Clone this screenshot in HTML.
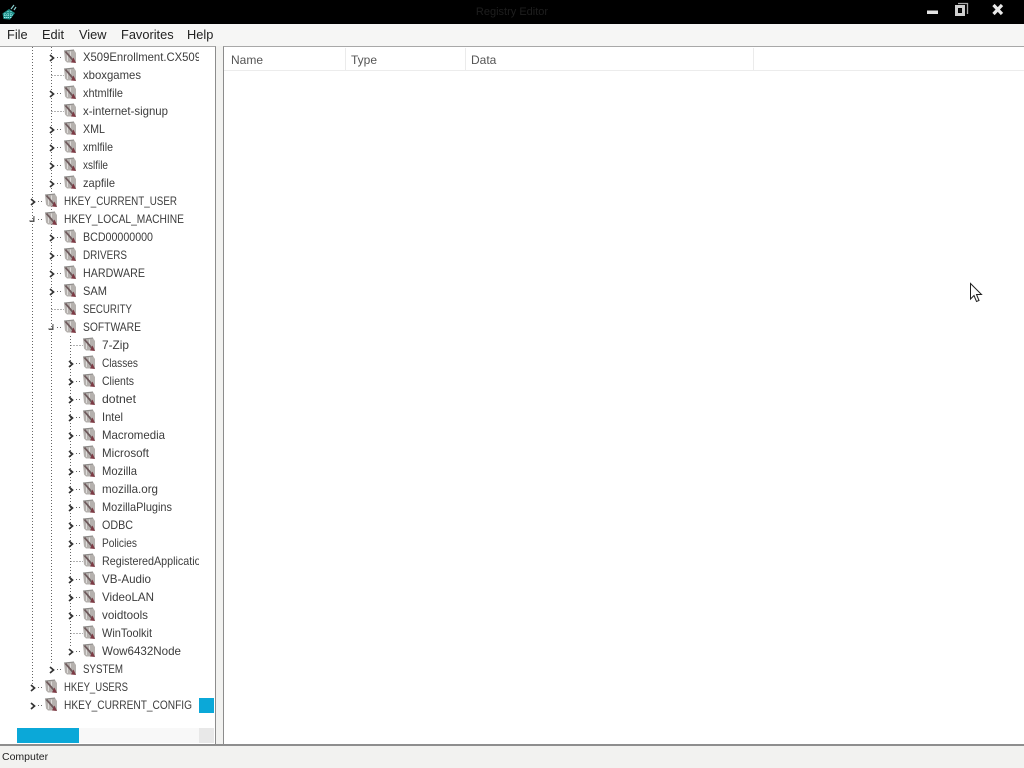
<!DOCTYPE html>
<html><head><meta charset="utf-8"><title>Registry Editor</title>
<style>
html,body{margin:0;padding:0;width:1024px;height:768px;overflow:hidden;background:#f2f2f0;font-family:"Liberation Sans",sans-serif}
.a{position:absolute}
#title{left:0;top:0;width:1024px;height:24px;background:#000}
#ttext{left:0;width:1024px;top:6px;text-align:center;font-size:11px;color:#1e1e1e}
#menu{left:0;top:24px;width:1024px;height:22px;background:#f6f6f5}
#menu span{position:absolute;top:3px;font-size:12.8px;color:#222}
#tree{left:0;top:46px;width:215px;height:699px;background:#fff;border-top:1px solid #a8a8a8;border-right:1px solid #8c8c8c;box-sizing:content-box}
#list{left:223px;top:46px;width:801px;height:698px;background:#fff;border-top:1px solid #a8a8a8;border-left:1px solid #8c8c8c}
#hdr{left:224px;top:70px;width:800px;height:1px;background:#ececec}
.hs{top:48px;width:1px;height:22px;background:#ebebeb}
.ht{top:53px;font-size:12px;color:#555}
#line{left:0;top:744px;width:1024px;height:2px;background:#8e8e8e}
#status{left:2px;top:751px;font-size:10.5px;color:#222}
</style></head><body>
<div class="a" id="title"></div>
<svg class="a" style="left:2px;top:4px" width="16" height="16" viewBox="0 0 16 16"><path d="M0.500 9.500L7 5L13 9L8 15.500L1.500 15Z" fill="#1f8f88"/><path d="M3 9v6M6 7v8M9 7v8M2 11h10M2 13.500h8" stroke="#bff" stroke-width=".8" stroke-dasharray="1 1"/><path d="M9 5l3-4M12 6l2-3" stroke="#8cc" stroke-width="1.200"/></svg>
<div class="a" id="ttext">Registry Editor</div>
<svg class="a" style="left:920px;top:0" width="100" height="24" viewBox="0 0 100 24">
<rect x="7" y="10.500" width="11" height="3.500" fill="#e4e4e4"/>
<rect x="36.500" y="6.500" width="7" height="8" fill="none" stroke="#d0d0d0" stroke-width="3"/>
<path d="M38 3.500h9.500v10.500" fill="none" stroke="#aaa" stroke-width="1.300"/>
<rect x="39" y="9" width="2.500" height="3" fill="#111"/>
<path d="M73.500 5L82 14M82 5L73.500 14" stroke="#e8e8e8" stroke-width="3.200"/>
</svg>
<div class="a" id="menu">
<span style="left:7px">File</span><span style="left:42px">Edit</span><span style="left:79px">View</span><span style="left:121px">Favorites</span><span style="left:187px">Help</span>
</div>
<div class="a" id="tree"></div>
<svg class="a" style="left:0;top:47px" width="215" height="697" viewBox="0 47 215 697">
<defs>
<clipPath id="c"><rect x="0" y="47" width="199" height="697"/></clipPath>
<g id="i">
<path d="M0 1L10 0L12 3L12 12.500L3 12.500L1 10.500Z" fill="#b5b1ae"/>
<path d="M3.500 2L3.500 11M6.500 1.500L6.500 6" stroke="#dedcda" stroke-width="1"/>
<path d="M1.500 1.500L10 11.500" stroke="#6e5a5c" stroke-width="1.800"/>
<path d="M9.500 7.500L12 13L7 12.500Z" fill="#7d3a44"/>
<path d="M0 1L10 0" stroke="#8a8886" stroke-width="1"/>
</g>
<path id="o" d="M-2.500 -3L1 0L-2.500 3" fill="none" stroke="#333" stroke-width="1.700"/>
<path id="d" d="M-3 1.500L1 1.500L1.500 -3L2.500 -3L2.500 3L-2 3Z" fill="#555"/>
</defs>
<g fill="none" stroke="#666" stroke-dasharray="1 2">
<path d="M32.500 47V692"/><path d="M51.500 47V664"/><path d="M70.500 336V646"/>
<path d="M51.500 75.500H64M51.500 111.500H64M51.500 309.500H64M70.500 345.500H83M70.500 561.500H83M70.500 633.500H83"/>
<path d="M57 57.500H63M57 93.500H63M57 129.500H63M57 147.500H63M57 165.500H63M57 183.500H63M57 237.500H63M57 255.500H63M57 273.500H63M57 291.500H63M57 327.500H63M57 669.500H63"/>
<path d="M38 201.500H44M38 219.500H44M38 687.500H44M38 705.500H44"/>
<path d="M76 363.500H82M76 381.500H82M76 399.500H82M76 417.500H82M76 435.500H82M76 453.500H82M76 471.500H82M76 489.500H82M76 507.500H82M76 525.500H82M76 543.500H82M76 579.500H82M76 597.500H82M76 615.500H82M76 651.500H82"/>
</g>
<g>
<use href="#o" x="52.500" y="58"/><use href="#o" x="52.500" y="94"/><use href="#o" x="52.500" y="130"/><use href="#o" x="52.500" y="148"/><use href="#o" x="52.500" y="166"/><use href="#o" x="52.500" y="184"/>
<use href="#o" x="33.500" y="202"/><use href="#d" x="32" y="219"/>
<use href="#o" x="52.500" y="238"/><use href="#o" x="52.500" y="256"/><use href="#o" x="52.500" y="274"/><use href="#o" x="52.500" y="292"/><use href="#d" x="51" y="327"/>
<use href="#o" x="71.500" y="364"/><use href="#o" x="71.500" y="382"/><use href="#o" x="71.500" y="400"/><use href="#o" x="71.500" y="418"/><use href="#o" x="71.500" y="436"/><use href="#o" x="71.500" y="454"/><use href="#o" x="71.500" y="472"/><use href="#o" x="71.500" y="490"/><use href="#o" x="71.500" y="508"/><use href="#o" x="71.500" y="526"/><use href="#o" x="71.500" y="544"/><use href="#o" x="71.500" y="580"/><use href="#o" x="71.500" y="598"/><use href="#o" x="71.500" y="616"/><use href="#o" x="71.500" y="652"/>
<use href="#o" x="52.500" y="670"/><use href="#o" x="33.500" y="688"/><use href="#o" x="33.500" y="706"/>
</g>
<g transform="translate(-1 0)">
<use href="#i" x="65" y="50"/><use href="#i" x="65" y="68"/><use href="#i" x="65" y="86"/><use href="#i" x="65" y="104"/><use href="#i" x="65" y="122"/><use href="#i" x="65" y="140"/><use href="#i" x="65" y="158"/><use href="#i" x="65" y="176"/>
<use href="#i" x="46" y="194"/><use href="#i" x="46" y="212"/>
<use href="#i" x="65" y="230"/><use href="#i" x="65" y="248"/><use href="#i" x="65" y="266"/><use href="#i" x="65" y="284"/><use href="#i" x="65" y="302"/><use href="#i" x="65" y="320"/>
<use href="#i" x="84" y="338"/><use href="#i" x="84" y="356"/><use href="#i" x="84" y="374"/><use href="#i" x="84" y="392"/><use href="#i" x="84" y="410"/><use href="#i" x="84" y="428"/><use href="#i" x="84" y="446"/><use href="#i" x="84" y="464"/><use href="#i" x="84" y="482"/><use href="#i" x="84" y="500"/><use href="#i" x="84" y="518"/><use href="#i" x="84" y="536"/><use href="#i" x="84" y="554"/><use href="#i" x="84" y="572"/><use href="#i" x="84" y="590"/><use href="#i" x="84" y="608"/><use href="#i" x="84" y="626"/><use href="#i" x="84" y="644"/>
<use href="#i" x="65" y="662"/><use href="#i" x="46" y="680"/><use href="#i" x="46" y="698"/>
</g>
<g clip-path="url(#c)" font-family="Liberation Sans" font-size="12" fill="#3c3c3c">
<text lengthAdjust="spacingAndGlyphs" x="83" y="61" textLength="118">X509Enrollment.CX509</text>
<text lengthAdjust="spacingAndGlyphs" x="83" y="79" textLength="58">xboxgames</text>
<text lengthAdjust="spacingAndGlyphs" x="83" y="97" textLength="40">xhtmlfile</text>
<text lengthAdjust="spacingAndGlyphs" x="83" y="115" textLength="85">x-internet-signup</text>
<text lengthAdjust="spacingAndGlyphs" x="83" y="133" textLength="22">XML</text>
<text lengthAdjust="spacingAndGlyphs" x="83" y="151" textLength="30">xmlfile</text>
<text lengthAdjust="spacingAndGlyphs" x="83" y="169" textLength="25">xslfile</text>
<text lengthAdjust="spacingAndGlyphs" x="83" y="187" textLength="32">zapfile</text>
<text lengthAdjust="spacingAndGlyphs" x="64" y="205" textLength="113">HKEY_CURRENT_USER</text>
<text lengthAdjust="spacingAndGlyphs" x="64" y="223" textLength="120">HKEY_LOCAL_MACHINE</text>
<text lengthAdjust="spacingAndGlyphs" x="83" y="241" textLength="70">BCD00000000</text>
<text lengthAdjust="spacingAndGlyphs" x="83" y="259" textLength="44">DRIVERS</text>
<text lengthAdjust="spacingAndGlyphs" x="83" y="277" textLength="62">HARDWARE</text>
<text lengthAdjust="spacingAndGlyphs" x="83" y="295" textLength="24">SAM</text>
<text lengthAdjust="spacingAndGlyphs" x="83" y="313" textLength="49">SECURITY</text>
<text lengthAdjust="spacingAndGlyphs" x="83" y="331" textLength="58">SOFTWARE</text>
<text lengthAdjust="spacingAndGlyphs" x="102" y="349" textLength="27">7-Zip</text>
<text lengthAdjust="spacingAndGlyphs" x="102" y="367" textLength="36">Classes</text>
<text lengthAdjust="spacingAndGlyphs" x="102" y="385" textLength="32">Clients</text>
<text lengthAdjust="spacingAndGlyphs" x="102" y="403" textLength="34">dotnet</text>
<text lengthAdjust="spacingAndGlyphs" x="102" y="421" textLength="21">Intel</text>
<text lengthAdjust="spacingAndGlyphs" x="102" y="439" textLength="63">Macromedia</text>
<text lengthAdjust="spacingAndGlyphs" x="102" y="457" textLength="47">Microsoft</text>
<text lengthAdjust="spacingAndGlyphs" x="102" y="475" textLength="35">Mozilla</text>
<text lengthAdjust="spacingAndGlyphs" x="102" y="493" textLength="56">mozilla.org</text>
<text lengthAdjust="spacingAndGlyphs" x="102" y="511" textLength="70">MozillaPlugins</text>
<text lengthAdjust="spacingAndGlyphs" x="102" y="529" textLength="31">ODBC</text>
<text lengthAdjust="spacingAndGlyphs" x="102" y="547" textLength="35">Policies</text>
<text lengthAdjust="spacingAndGlyphs" x="102" y="565" textLength="110">RegisteredApplications</text>
<text lengthAdjust="spacingAndGlyphs" x="102" y="583" textLength="49">VB-Audio</text>
<text lengthAdjust="spacingAndGlyphs" x="102" y="601" textLength="52">VideoLAN</text>
<text lengthAdjust="spacingAndGlyphs" x="102" y="619" textLength="46">voidtools</text>
<text lengthAdjust="spacingAndGlyphs" x="102" y="637" textLength="50">WinToolkit</text>
<text lengthAdjust="spacingAndGlyphs" x="102" y="655" textLength="79">Wow6432Node</text>
<text lengthAdjust="spacingAndGlyphs" x="83" y="673" textLength="40">SYSTEM</text>
<text lengthAdjust="spacingAndGlyphs" x="64" y="691" textLength="64">HKEY_USERS</text>
<text lengthAdjust="spacingAndGlyphs" x="64" y="709" textLength="128">HKEY_CURRENT_CONFIG</text>
</g>
<rect x="199" y="698" width="15" height="15" fill="#0ba8d8"/>
<rect x="17" y="728" width="182" height="15" fill="#f8f8f8"/>
<rect x="17" y="728" width="62" height="15" fill="#0ba8d8"/>
<rect x="199" y="728" width="15" height="15" fill="#e8e8e8"/>
</svg>
<div class="a" id="list"></div>
<div class="a" id="hdr"></div>
<div class="a hs" style="left:345px"></div>
<div class="a hs" style="left:465px"></div>
<div class="a hs" style="left:753px"></div>
<div class="a ht" style="left:231px">Name</div>
<div class="a ht" style="left:351px">Type</div>
<div class="a ht" style="left:471px">Data</div>
<svg class="a" style="left:968px;top:282px" width="16" height="22" viewBox="0 0 16 22"><path d="M2.500 1.500V17L6 13.500L8.500 19.500L11 18.500L8.500 12.500H13.500Z" fill="#fff" stroke="#222" stroke-width="1"/></svg>
<div class="a" id="line"></div>
<div class="a" id="status">Computer</div>
</body></html>
